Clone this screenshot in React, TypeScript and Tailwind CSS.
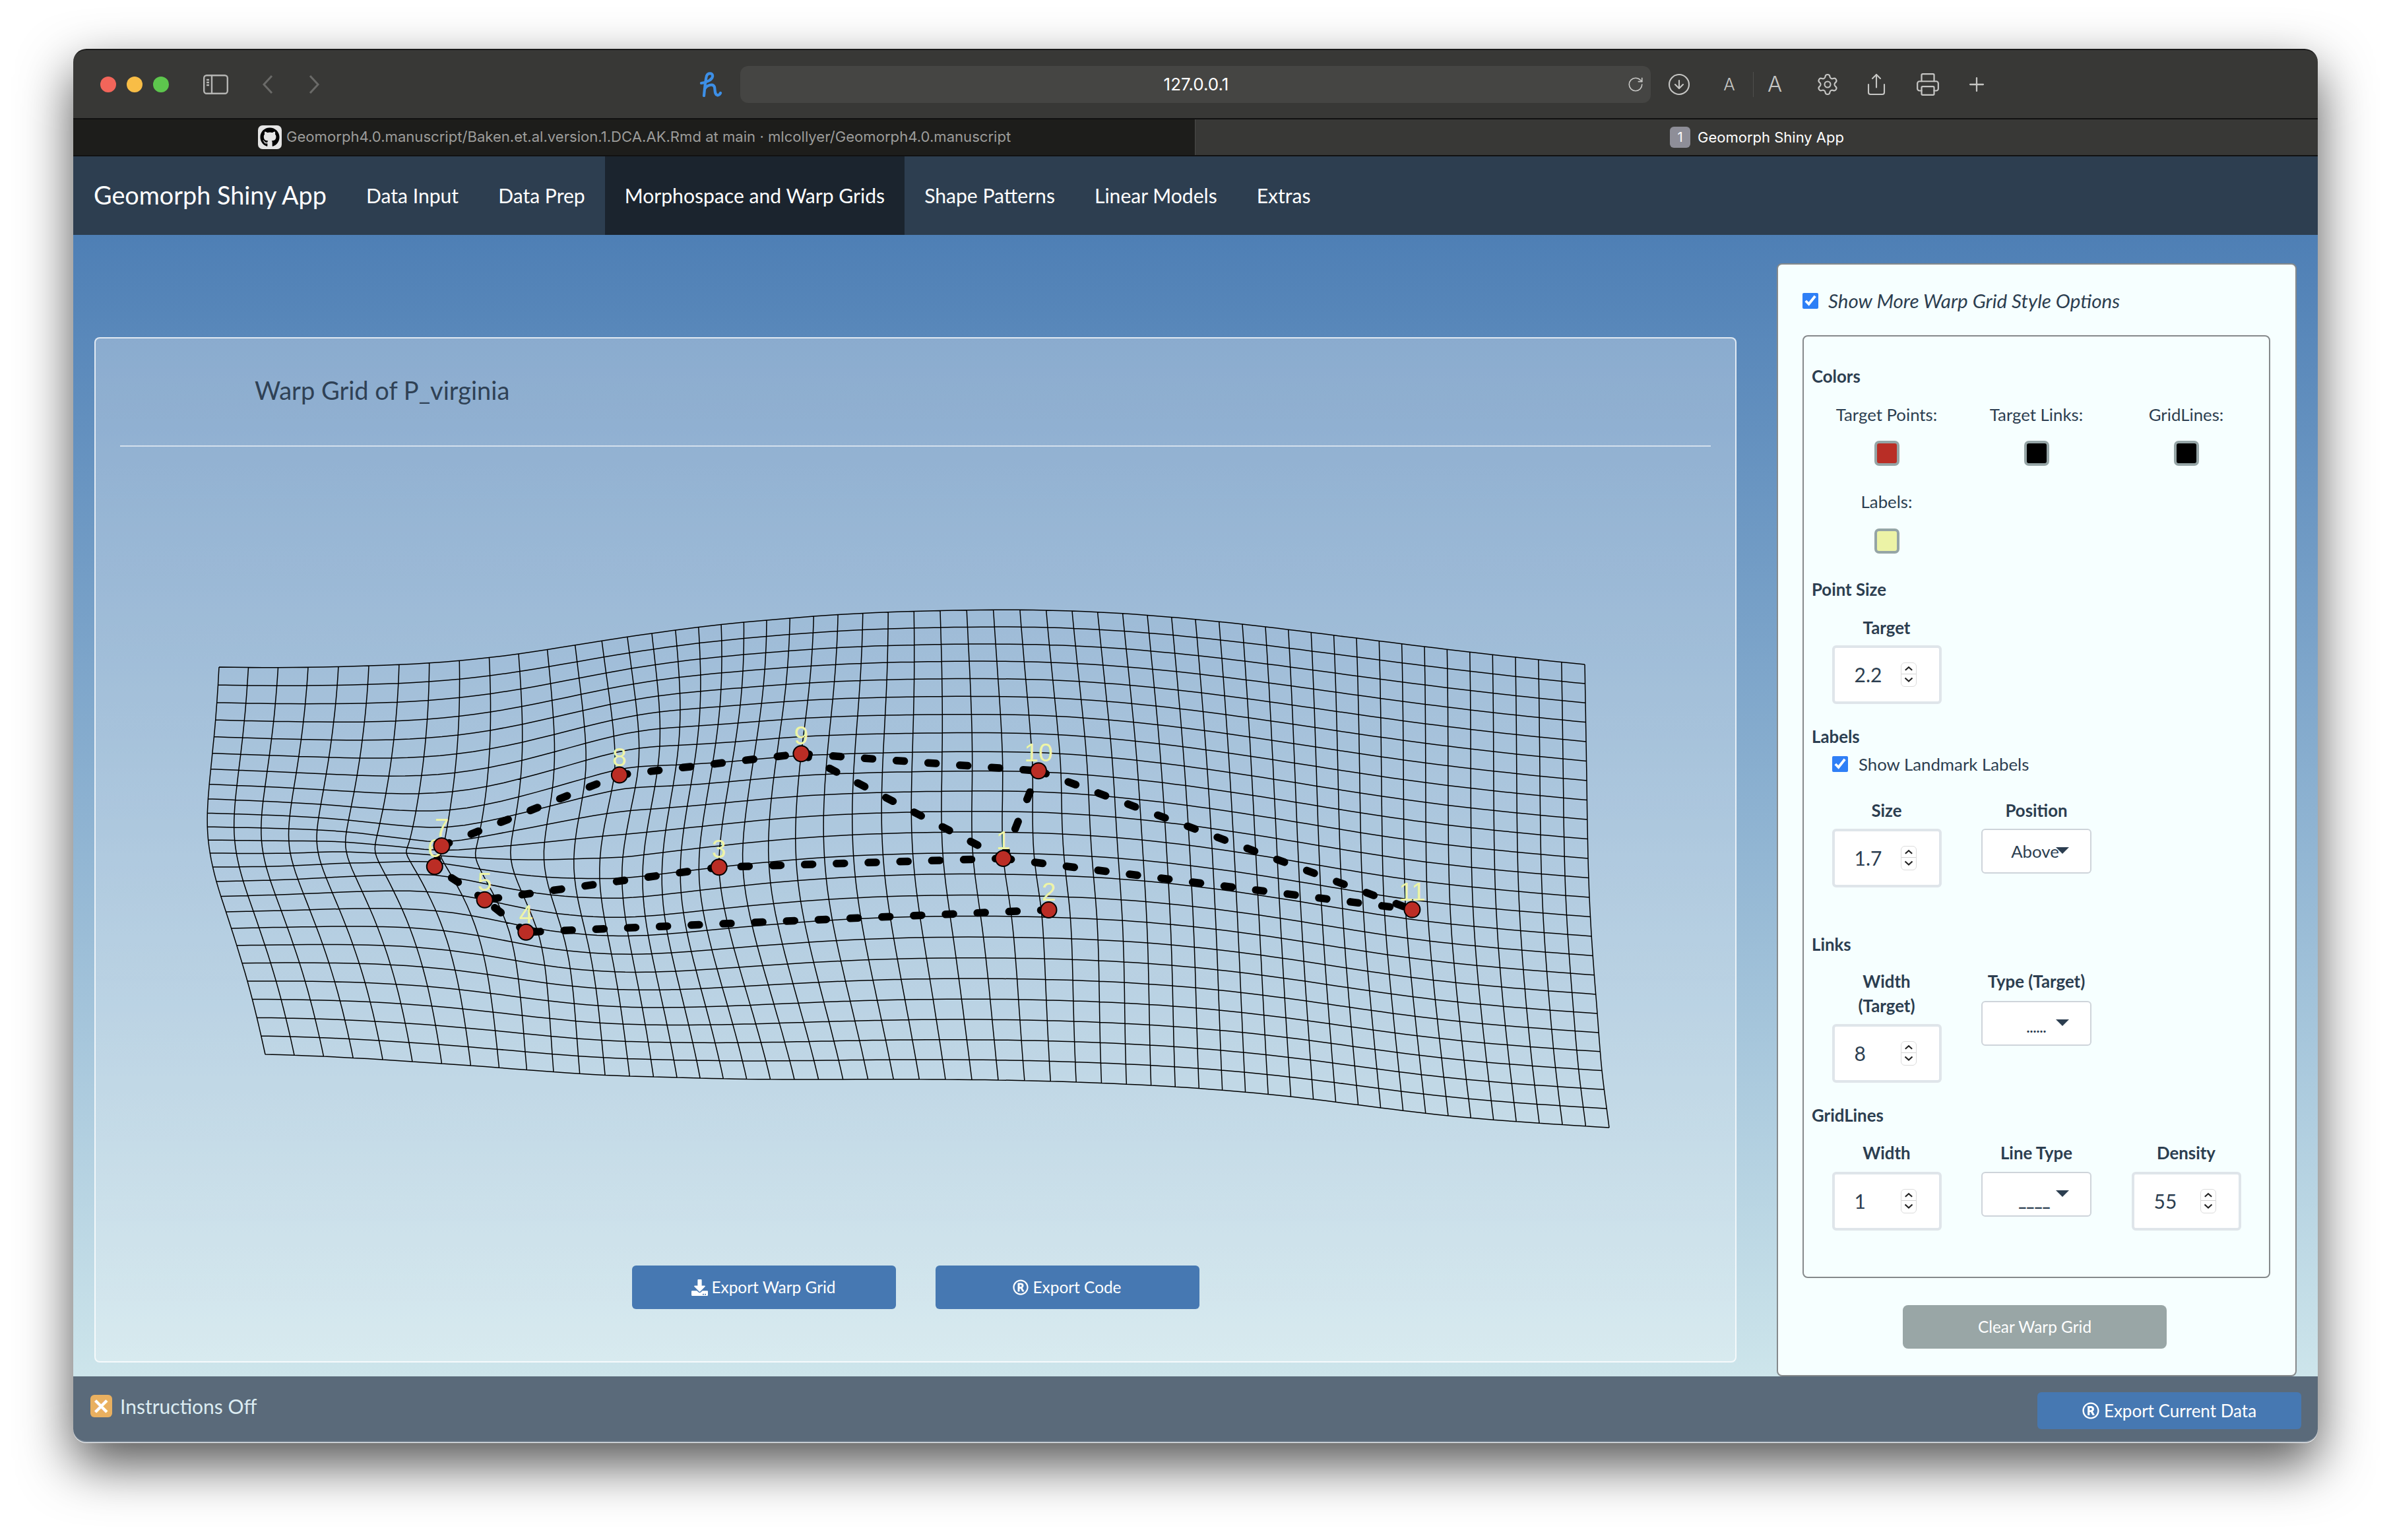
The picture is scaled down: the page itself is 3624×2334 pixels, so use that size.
import { Settings, Share, Printer, Plus, RotateCw, CircleArrowDown } from "lucide-react";
import { FaDownload, FaRegRegistered, FaGithub } from "react-icons/fa";

// [u, v, x, y] : grid index -> page pixel
const landmarks: Record<string, [number, number, number, number]> = {
  "1": [29, 13.25, 1520.7, 1301],
  "2": [30.25, 15.65, 1589.5, 1379],
  "3": [19, 13, 1089.7, 1314.3],
  "4": [9.56, 16.3, 797.3, 1412.8],
  "5": [8.62, 15, 734.6, 1363.8],
  "6": [7.65, 13.4, 658.8, 1313.3],
  "7": [7.95, 10.35, 669.5, 1282],
  "8": [13.2, 8.3, 938.9, 1174.5],
  "9": [22, 7.9, 1214.4, 1142.3],
  "10": [30.2, 8.95, 1574, 1168.3],
  "11": [46.3, 13.5, 2140.4, 1378.6],
};

const anchors: [number, number, number, number][] = [
  [0, 0, 332, 1011], [5, 0, 559, 1009], [10, 0, 786, 991], [15, 0, 988, 960], [20, 0, 1162, 940],
  [27, 0, 1425, 925.5], [32, 0, 1625, 926], [40, 0, 1918, 950], [47, 0, 2159, 980], [54, 0, 2402, 1007],
  [0, 24, 402, 1598], [5, 24, 625, 1609], [10, 24, 839, 1624.5], [15, 24, 1026, 1633], [20, 24, 1204, 1636],
  [26, 24, 1433, 1636], [32, 24, 1669.5, 1641.5], [40, 24, 1956.5, 1662], [47, 24, 2195, 1691], [54, 24, 2439, 1709],
  [0, 3, 326.7, 1091], [0, 6, 319.5, 1165.5], [0, 10, 314.3, 1253], [0, 12, 318.3, 1293], [0, 14, 328, 1336],
  [0, 16, 342.5, 1382], [0, 20, 375, 1487],
  [54, 3, 2403.5, 1094.6], [54, 6, 2405, 1183], [54, 12, 2409, 1360], [54, 18, 2421, 1536], [54, 21, 2428, 1622.5],
  [3, 12, 440, 1293], [5, 12, 525, 1291], [6, 12, 569, 1293], [7, 12, 616, 1293],
  [9, 12, 721, 1300], [11, 12, 824.5, 1303], [14, 12, 944, 1299],
];

const ctrl = [...Object.values(landmarks), ...anchors];

const kernel = (dx: number, dy: number) => {
  const r2 = dx * dx + dy * dy;
  return r2 === 0 ? 0 : r2 * Math.log(r2);
};

function solve(A: number[][], b: number[][]) {
  const n = A.length;
  const M = A.map((row, i) => [...row, ...b[i]]);
  for (let c = 0; c < n; c++) {
    let p = c;
    for (let r = c + 1; r < n; r++) if (Math.abs(M[r][c]) > Math.abs(M[p][c])) p = r;
    [M[c], M[p]] = [M[p], M[c]];
    for (let r = 0; r < n; r++) {
      if (r === c) continue;
      const f = M[r][c] / M[c][c];
      for (let k = c; k < M[r].length; k++) M[r][k] -= f * M[c][k];
    }
  }
  return M.map((row, i) => row.slice(n).map((val) => val / row[i]));
}

// thin-plate spline through the control points
const n = ctrl.length;
const A: number[][] = [];
for (let i = 0; i < n; i++) {
  const [ui, vi] = ctrl[i];
  A.push([...ctrl.map(([u, v]) => kernel((ui - u) * 1.25, vi - v)), 1, ui * 1.25, vi]);
}
A.push([...ctrl.map(() => 1), 0, 0, 0]);
A.push([...ctrl.map(([u]) => u * 1.25), 0, 0, 0]);
A.push([...ctrl.map(([, v]) => v), 0, 0, 0]);
const weights = solve(A, [...ctrl.map(([, , x, y]) => [x, y]), [0, 0], [0, 0], [0, 0]]);

function warp(u: number, v: number) {
  const out = [0, 0];
  for (const d of [0, 1]) {
    let s = weights[n][d] + weights[n + 1][d] * u * 1.25 + weights[n + 2][d] * v;
    for (let i = 0; i < n; i++) s += weights[i][d] * kernel((u - ctrl[i][0]) * 1.25, v - ctrl[i][1]);
    out[d] = s;
  }
  return out;
}

const gridPath = (() => {
  let d = "";
  for (let v = 0; v <= 24; v++) {
    for (let u = 0; u <= 54; u += 0.5) {
      const [x, y] = warp(u, v);
      d += `${u === 0 ? "M" : "L"}${x.toFixed(1)} ${y.toFixed(1)}`;
    }
  }
  for (let u = 0; u <= 54; u++) {
    for (let v = 0; v <= 24; v += 0.5) {
      const [x, y] = warp(u, v);
      d += `${v === 0 ? "M" : "L"}${x.toFixed(1)} ${y.toFixed(1)}`;
    }
  }
  return d;
})();

const links = [
  ["4", "5"], ["5", "6"], ["6", "7"], ["7", "8"], ["8", "9"], ["9", "10"], ["10", "11"],
  ["1", "11"], ["1", "10"], ["9", "1"], ["1", "3"], ["3", "5"], ["2", "4"],
];

function WarpGrid() {
  return (
    <svg className="block w-[2485px] h-[1223px]" viewBox="145 677 2485 1223">
      <path d={gridPath} fill="none" stroke="#000" strokeWidth={1.5} />
      {links.map(([a, b]) => (
        <line
          key={a + b}
          x1={landmarks[a][2]}
          y1={landmarks[a][3]}
          x2={landmarks[b][2]}
          y2={landmarks[b][3]}
          stroke="#000"
          strokeWidth={11.5}
          strokeLinecap="round"
          strokeDasharray="12 36.2"
        />
      ))}
      {Object.entries(landmarks).map(([k, p]) => (
        <text
          key={k}
          x={p[2]}
          y={p[3] - 14}
          textAnchor="middle"
          fontSize={39}
          fontFamily="'Liberation Sans', sans-serif"
          fill="#eef4a6"
        >
          {k}
        </text>
      ))}
      {Object.entries(landmarks).map(([k, p]) => (
        <circle key={k} cx={p[2]} cy={p[3]} r={12} fill="#bb2d25" stroke="#000" strokeWidth={2} />
      ))}
    </svg>
  );
}

function NumberBox({ value }: { value: string }) {
  return (
    <div className="w-[166px] h-[89px] bg-white border-4 border-[#dfe5ea] rounded-[6px] flex items-center justify-between pl-[30px] pr-[34px] text-[30px] text-[#2c3e50]">
      <span>{value}</span>
      <div className="w-[24px] h-[37px] bg-white border border-[#dcdcdc] rounded-[6px] flex flex-col">
        <svg viewBox="0 0 22 17" className="w-[22px] h-[17px] border-b border-[#d4d4d4]">
          <path d="M5.5 11.5l5.5-5 5.5 5" fill="none" stroke="#222" strokeWidth={2.2} />
        </svg>
        <svg viewBox="0 0 22 17" className="w-[22px] h-[17px]">
          <path d="M5.5 5.5l5.5 5 5.5-5" fill="none" stroke="#222" strokeWidth={2.2} />
        </svg>
      </div>
    </div>
  );
}

function SelectBox({ children, className }: { children: React.ReactNode; className?: string }) {
  return (
    <div className={`relative w-[167px] h-[68px] bg-white border-2 border-[#ced4da] rounded-[6px] flex justify-center text-[#2c3e50] ${className}`}>
      {children}
      <div className="absolute left-[111px] top-[26px] w-0 h-0 border-x-[10px] border-t-[10px] border-x-transparent border-t-[#2c3e50]" />
    </div>
  );
}

function Swatch({ color }: { color: string }) {
  return <div className="w-[38px] h-[38px] border-4 border-[#95a5a6] rounded-[7px] mx-auto" style={{ backgroundColor: color }} />;
}

const labelCls = "h-[40px] leading-[40px] text-center text-[25.8px] text-[#2c3e50]";
const headCls = "h-[40px] leading-[40px] text-[25.8px] font-bold text-[#2c3e50]";

function StylePanel() {
  return (
    <div className="w-[788px] h-[1687px] mt-[43px] ml-[61px] bg-[#f6ffff] border-2 border-[#85898b] rounded-[8px] pl-[37px] pt-[43px]">
      <label className="flex items-center h-[24px] gap-[15px] italic text-[29.6px] text-[#2c3e50]">
        <input type="checkbox" defaultChecked className="w-[24px] h-[24px] accent-[#2f7ff6]" />
        <span>Show More Warp Grid Style Options</span>
      </label>

      <div className="mt-[40px] w-[709px] h-[1429px] border-2 border-[#85898b] rounded-[8px] pl-[12px]">
        <div className={`${headCls} mt-[40px]`}>Colors</div>
        <div className="grid grid-cols-[227px_227px_227px] mt-[18px]">
          <div className={labelCls}>Target Points:</div>
          <div className={labelCls}>Target Links:</div>
          <div className={labelCls}>GridLines:</div>
        </div>
        <div className="grid grid-cols-[227px_227px_227px] mt-[20px]">
          <Swatch color="#b92e26" />
          <Swatch color="#000000" />
          <Swatch color="#000000" />
        </div>
        <div className="grid grid-cols-[227px_227px_227px] mt-[34px]">
          <div className={labelCls}>Labels:</div>
        </div>
        <div className="grid grid-cols-[227px_227px_227px] mt-[21px]">
          <Swatch color="#ecf3a6" />
        </div>

        <div className={`${headCls} mt-[34px]`}>Point Size</div>
        <div className="w-[227px] mt-[18px]">
          <div className={`${labelCls} font-bold`}>Target</div>
          <div className="flex justify-center mt-[7px]"><NumberBox value="2.2" /></div>
        </div>

        <div className={`${headCls} mt-[29px]`}>Labels</div>
        <label className="flex items-center h-[40px] mt-[2px] ml-[31px] gap-[16px] text-[25.8px] text-[#2c3e50]">
          <input type="checkbox" defaultChecked className="w-[24px] h-[24px] accent-[#2f7ff6]" />
          <span>Show Landmark Labels</span>
        </label>
        <div className="grid grid-cols-[227px_227px_227px] mt-[30px]">
          <div>
            <div className={`${labelCls} font-bold`}>Size</div>
            <div className="flex justify-center mt-[8px]"><NumberBox value="1.7" /></div>
          </div>
          <div>
            <div className={`${labelCls} font-bold`}>Position</div>
            <div className="flex justify-center mt-[8px]">
              <SelectBox className="items-center text-[25.8px] pr-[4px]">Above</SelectBox>
            </div>
          </div>
        </div>

        <div className={`${headCls} mt-[66px]`}>Links</div>
        <div className="grid grid-cols-[227px_227px_227px] mt-[18px]">
          <div>
            <div className="text-center leading-[37px] text-[25.8px] font-bold text-[#2c3e50]">Width<br />(Target)</div>
            <div className="flex justify-center mt-[9px]"><NumberBox value="8" /></div>
          </div>
          <div>
            <div className="text-center leading-[37px] text-[25.8px] font-bold text-[#2c3e50]">Type (Target)</div>
            <div className="flex justify-center mt-[11px]">
              <SelectBox className="items-end pb-[16px] text-[21px] leading-[20px] font-bold">......</SelectBox>
            </div>
          </div>
        </div>

        <div className={`${headCls} mt-[29px]`}>GridLines</div>
        <div className="grid grid-cols-[227px_227px_227px] mt-[17px]">
          <div>
            <div className={`${labelCls} font-bold`}>Width</div>
            <div className="flex justify-center mt-[9px]"><NumberBox value="1" /></div>
          </div>
          <div>
            <div className={`${labelCls} font-bold`}>Line Type</div>
            <div className="flex justify-center mt-[9px]">
              <SelectBox className="items-end pb-[14px] pr-[6px] text-[26px] leading-[20px] font-bold">____</SelectBox>
            </div>
          </div>
          <div>
            <div className={`${labelCls} font-bold`}>Density</div>
            <div className="flex justify-center mt-[9px]"><NumberBox value="55" /></div>
          </div>
        </div>
      </div>

      <button className="block mt-[41px] ml-[152px] w-[400px] h-[66px] bg-[#99a6a6] rounded-[8px] text-white text-[24.4px]">
        Clear Warp Grid
      </button>
    </div>
  );
}

function TitleBar() {
  return (
    <div className="relative flex items-center h-[105px] bg-[#383836] border-t-2 border-[#1a1a1a] rounded-t-[20px]">
      <div className="flex gap-[16px] ml-[41px]">
        <div className="w-[24px] h-[24px] rounded-full bg-[#f2655a]" />
        <div className="w-[24px] h-[24px] rounded-full bg-[#f8bd46]" />
        <div className="w-[24px] h-[24px] rounded-full bg-[#5dc64d]" />
      </div>
      <svg viewBox="0 0 38 30" className="w-[38px] h-[30px] ml-[52px]" fill="none" stroke="#b5b5b3" strokeWidth={2.4}>
        <rect x="1.2" y="1.2" width="35.6" height="27.6" rx="4" />
        <path d="M13 1v28M5 8h4M5 12h4M5 16h4" />
      </svg>
      <svg viewBox="0 0 18 30" className="w-[18px] h-[30px] ml-[51px]" fill="none" stroke="#6a6a68" strokeWidth={3}>
        <path d="M15 2L3 15l12 13" />
      </svg>
      <svg viewBox="0 0 18 30" className="w-[18px] h-[30px] ml-[52px]" fill="none" stroke="#6a6a68" strokeWidth={3}>
        <path d="M3 2l12 13L3 28" />
      </svg>
      <svg viewBox="0 0 36 38" className="w-[36px] h-[38px] ml-[574px]" fill="none" stroke="#3d8fe6" strokeWidth={4.2} strokeLinecap="round" strokeLinejoin="round">
        <path d="M4 17C12 16 20 12 21 7C22 1 14 1 12 6C10 13 9 26 8 36" />
        <path d="M9 26C12 20 22 17 24 23C25 28 24 34 28 35C30 36 32 34 33 32" />
      </svg>
      <div className="relative flex items-center justify-center w-[1380px] h-[56px] ml-[27px] pl-[2px] bg-[#454543] rounded-[12px] text-white text-[26px] font-['Inter',sans-serif]">
        127.0.0.1
        <RotateCw className="absolute right-[10px] top-[15px] w-[26px] h-[26px] text-[#c6c6c4]" strokeWidth={1.5} />
      </div>
      <CircleArrowDown className="w-[36px] h-[36px] ml-[25px] text-[#c6c6c4]" strokeWidth={1.4} />
      <span className="ml-[47px] w-[22px] text-center text-[26px] font-light text-[#c6c6c4] font-['Inter',sans-serif]">A</span>
      <div className="w-px h-[38px] ml-[25px] bg-[#4e4e4c]" />
      <span className="ml-[19px] w-[26px] text-center text-[33px] font-light text-[#c6c6c4] font-['Inter',sans-serif]">A</span>
      <Settings className="w-[36px] h-[36px] ml-[49px] text-[#c6c6c4]" strokeWidth={1.4} />
      <Share className="w-[36px] h-[38px] ml-[38px] text-[#c6c6c4]" strokeWidth={1.4} />
      <Printer className="w-[38px] h-[38px] ml-[41px] text-[#c6c6c4]" strokeWidth={1.4} />
      <Plus className="w-[34px] h-[34px] ml-[38px] text-[#c6c6c4]" strokeWidth={1.6} />
    </div>
  );
}

function TabBar() {
  return (
    <div className="flex h-[58px] border-y-2 border-[#111] bg-[#383836] font-['Inter',sans-serif]">
      <div className="flex items-center w-[1701px] bg-[#1d1d1b] border-r border-[#4a4a48] pl-[280px] text-[22.1px] text-[#9c9c9a]">
        <div className="flex items-center justify-center w-[36px] h-[36px] bg-[#e4e4e4] rounded-[7px]">
          <FaGithub className="w-[30px] h-[30px] text-black" />
        </div>
        <span className="ml-[7px] whitespace-nowrap">Geomorph4.0.manuscript/Baken.et.al.version.1.DCA.AK.Rmd at main · mlcollyer/Geomorph4.0.manuscript</span>
      </div>
      <div className="flex items-center pl-[719px] text-[22px] text-white">
        <div className="flex items-center justify-center w-[31px] h-[32px] bg-[#8e8e98] rounded-[6px] text-[20px]">1</div>
        <span className="ml-[11px] whitespace-nowrap">Geomorph Shiny App</span>
      </div>
    </div>
  );
}

function NavBar() {
  const items = ["Data Input", "Data Prep", "Morphospace and Warp Grids", "Shape Patterns", "Linear Models", "Extras"];
  return (
    <div className="flex h-[119px] bg-[#2d3e50] text-white">
      <div className="flex items-center w-[414px] pl-[31px] text-[37.8px]">Geomorph Shiny App</div>
      {items.map((item) => (
        <div key={item} className={`flex items-center px-[30px] text-[30.1px] ${item.startsWith("Morpho") ? "bg-[#1b242e]" : ""}`}>
          {item}
        </div>
      ))}
    </div>
  );
}

export default function App() {
  return (
    <div className="w-[3624px] h-[2334px] bg-white pt-[74px] pl-[111px] overflow-hidden font-['Lato',sans-serif]">
      <div className="w-[3402px] h-[2113px] flex flex-col rounded-[20px] shadow-[0_32px_80px_rgba(0,0,0,0.68)]">
        <TitleBar />
        <TabBar />
        <NavBar />

        <div className="flex h-[1730px] bg-gradient-to-b from-[#4e7fb5] to-[#cde5eb]">
          <div className="w-[2489px] h-[1554px] mt-[155px] ml-[32px] bg-gradient-to-b from-white/30 to-white/25 border-2 border-white/75 rounded-[8px] flex flex-col">
            <div className="h-[50px] leading-[50px] mt-[53px] pl-[241px] text-[38px] text-[#2f4155]">Warp Grid of P_virginia</div>
            <div className="h-[2px] mt-[59px] mx-[37px] bg-white/60" />
            <WarpGrid />
            <div className="flex justify-center gap-[60px] mt-[18px]">
              <button className="flex items-center justify-center gap-[5px] w-[400px] h-[66px] bg-[#4678b2] rounded-[6px] text-white text-[24.4px]">
                <FaDownload className="w-[25px] h-[25px]" />
                Export Warp Grid
              </button>
              <button className="flex items-center justify-center gap-[6px] w-[400px] h-[66px] bg-[#4678b2] rounded-[6px] text-white text-[24.4px]">
                <FaRegRegistered className="w-[24px] h-[24px]" />
                Export Code
              </button>
            </div>
          </div>
          <StylePanel />
        </div>

        <div className="flex justify-between h-[100px] bg-[#5a6a7a] rounded-b-[20px] border-b-2 border-[#7e8c9a]">
          <div className="flex items-start pt-[28px] pl-[26px]">
            <div className="flex items-center justify-center w-[33px] h-[34px] bg-[#e9b060] rounded-[6px] text-white font-bold text-[32px] leading-none">✕</div>
            <span className="ml-[12px] text-[30px] leading-[34px] text-[#dcecf2]">Instructions Off</span>
          </div>
          <button className="flex items-center justify-center gap-[7px] w-[400px] h-[56px] mt-[24px] mr-[25px] bg-[#4678b2] rounded-[6px] text-white text-[26px]">
            <FaRegRegistered className="w-[26px] h-[26px]" />
            Export Current Data
          </button>
        </div>
      </div>
    </div>
  );
}
